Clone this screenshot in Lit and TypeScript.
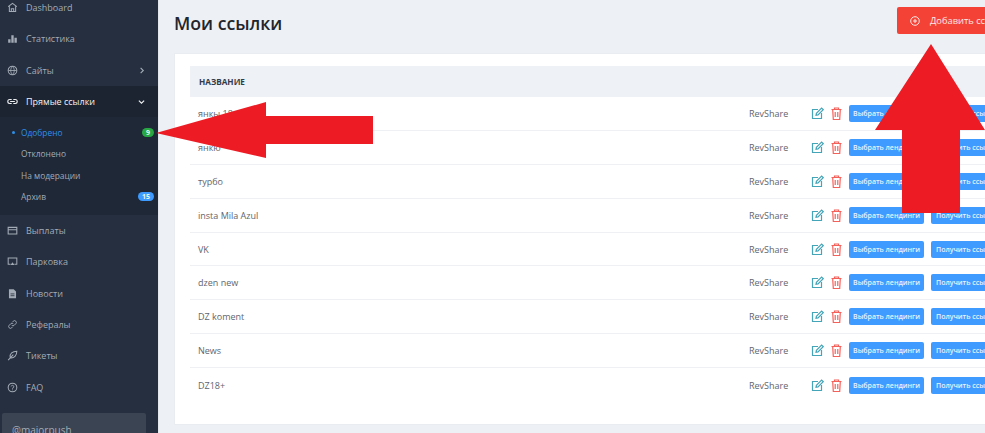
import {html, css, LitElement, svg} from 'lit';
import {customElement} from 'lit/decorators.js';

const ICONS: Record<string, unknown> = {
  home: svg`<path d="M1.500 6 7 1.800 12.500 6M3 5.500V12h8V5.500M5.500 12V8.500h3V12" fill="none" stroke="currentColor" stroke-width="1.300"/>`,
  chart: svg`<path d="M1.500 12.500V8h3v4.500zM5.500 12.500V3h3v9.500zM9.500 12.500V6h3v6.500z" fill="currentColor"/>`,
  globe: svg`<circle cx="7" cy="7" r="5.500" fill="none" stroke="currentColor" stroke-width="1.300"/><path d="M1.800 7h10.400M7 1.800c-3 3-3 7.400 0 10.400M7 1.800c3 3 3 7.400 0 10.400" fill="none" stroke="currentColor" stroke-width="1.100"/>`,
  link: svg`<path d="M6 4.500H3.500a2.500 2.500 0 0 0 0 5H6M8 4.500h2.500a2.500 2.500 0 0 1 0 5H8M4 7h6" fill="none" stroke="currentColor" stroke-width="1.400"/>`,
  card: svg`<path d="M1.500 3h11v8.500h-11zM1.500 6h11" fill="none" stroke="currentColor" stroke-width="1.400"/>`,
  monitor: svg`<path d="M4.500 10.500H1.500V2.500h11v8h-3" fill="none" stroke="currentColor" stroke-width="1.300"/><path d="M7 8l2.500 3.500h-5z" fill="currentColor"/>`,
  file: svg`<path d="M2.500 1.500h6l3 3v8.500h-9z" fill="currentColor"/><path d="M4.500 7.500h5M4.500 9.800h5" stroke="#252f3f" stroke-width="1"/>`,
  chain: svg`<path d="M6 8a2.200 2.200 0 0 0 3.200 0l2-2a2.200 2.200 0 0 0-3.200-3.200L7 3.800M8 6a2.200 2.200 0 0 0-3.200 0l-2 2A2.200 2.200 0 0 0 6 11.200l1-1" fill="none" stroke="currentColor" stroke-width="1.200"/>`,
  feather: svg`<path d="M1.500 12.800 8 6M4 9.500c-.8-4.500 3-8 8.500-8 0 5.500-3.500 9-8 8.500" fill="none" stroke="currentColor" stroke-width="1.300"/>`,
  help: svg`<circle cx="7" cy="7" r="5.500" fill="none" stroke="currentColor" stroke-width="1.300"/><path d="M5.300 5.700A1.700 1.700 0 1 1 7 7.700v.8M7 9.500v1" fill="none" stroke="currentColor" stroke-width="1.100"/>`,
};

const icon = (name: string) => html`<svg class="mi" viewBox="0 0 14 14">${ICONS[name]}</svg>`;

const TOP = [
  {label: 'Dashboard', icon: 'home'},
  {label: 'Статистика', icon: 'chart'},
  {label: 'Сайты', icon: 'globe', chevron: true},
];

const BOTTOM = [
  {label: 'Выплаты', icon: 'card'},
  {label: 'Парковка', icon: 'monitor'},
  {label: 'Новости', icon: 'file'},
  {label: 'Рефералы', icon: 'chain'},
  {label: 'Тикеты', icon: 'feather'},
  {label: 'FAQ', icon: 'help'},
];

const LINKS = ['янкы 18+', 'янкю', 'турбо', 'insta Mila Azul', 'VK', 'dzen new', 'DZ koment', 'News', 'DZ18+'];

@customElement('app-root')
export class AppRoot extends LitElement {
  static styles = css`
    :host {
      display: block;
      position: relative;
      width: 985px;
      height: 433px;
      overflow: hidden;
      font-family: 'Open Sans', 'Noto Sans', sans-serif;
      background: #edf0f4;
    }
    .layout {
      display: flex;
      height: 433px;
    }
    .side {
      flex: 0 0 158px;
      background: #252f3f;
      color: #a3abb6;
      font-size: 9px;
      overflow: hidden;
    }
    .nav {
      margin-top: -8.300px;
    }
    .item {
      display: flex;
      align-items: center;
      height: 31.400px;
      padding: 0 13px 0 7px;
    }
    .mi {
      width: 11px;
      height: 11px;
      margin-right: 8px;
      flex: none;
    }
    .item .grow {
      flex: 1;
    }
    .chev {
      width: 7px;
      height: 7px;
      fill: none;
      stroke: currentColor;
      stroke-width: 1.300;
    }
    .open {
      background: #1c2431;
      color: #f0f2f4;
    }
    .sub {
      background: #1f2836;
      padding: 5px 4px 8px 21px;
      font-size: 8.400px;
    }
    .sub div {
      position: relative;
      display: flex;
      align-items: center;
      justify-content: space-between;
      height: 21.100px;
    }
    .sub .on {
      color: #2f8fe8;
    }
    .sub .on::before {
      content: '';
      position: absolute;
      left: -9px;
      top: 9px;
      width: 3px;
      height: 3px;
      border-radius: 50%;
      background: #2f8fe8;
    }
    .badge {
      font-size: 7px;
      font-weight: 700;
      color: #e9f5ec;
      border-radius: 8px;
      line-height: 9px;
      padding: 0 4px;
    }
    .green {
      background: #28a745;
    }
    .blue {
      background: #3d9bff;
    }
    .user {
      margin: 10px 12px 0 2px;
      height: 60px;
      background: #3a4453;
      border-radius: 2px;
      padding: 10px;
      font-size: 10px;
    }
    .main {
      flex: 1;
      min-width: 0;
      border-left: 1px solid #e4e7eb;
    }
    .head {
      display: flex;
      justify-content: space-between;
      align-items: center;
      height: 41px;
      margin-top: 7px;
      padding: 0 0 14px 15px;
      box-sizing: border-box;
      margin-bottom: 5px;
    }
    h1 {
      margin: 0;
      padding-top: 4px;
      font-size: 17.700px;
      font-weight: 600;
      color: #22262c;
    }
    .add {
      display: flex;
      align-items: center;
      width: 88px;
      height: 27px;
      flex: none;
      box-sizing: border-box;
      padding-left: 13px;
      background: #f44336;
      color: #fde9e7;
      font-size: 9.300px;
      white-space: nowrap;
      border-radius: 2px 0 0 2px;
      overflow: hidden;
    }
    .add svg {
      width: 10px;
      height: 10px;
      margin-right: 10px;
      flex: none;
    }
    .card {
      background: #fff;
      margin-left: 15px;
      height: 372px;
      padding: 12px 0 0 15px;
      box-sizing: border-box;
      border: 1px solid #e9ecf0;
      border-right: 0;
    }
    .thead {
      height: 31px;
      background: #eef1f5;
      display: flex;
      align-items: center;
      padding-left: 9px;
      font-size: 8.200px;
      font-weight: 700;
      color: #333b48;
    }
    .row {
      display: grid;
      grid-template-columns: 551px 62px 20px 18px 82px 80px;
      align-items: center;
      height: 33.900px;
      padding-left: 8px;
      box-sizing: border-box;
      border-bottom: 1px solid #eef0f3;
      font-size: 9px;
      color: #5f656d;
      white-space: nowrap;
    }
    .row:last-child {
      border-bottom: 0;
    }
    .act {
      display: block;
    }
    .btn {
      display: flex;
      align-items: center;
      justify-content: center;
      height: 17px;
      background: #3f9bff;
      color: #e8f3ff;
      font-size: 7px;
      font-weight: 600;
      border-radius: 2px;
    }
    .btn.pick {
      width: 75px;
    }
    .btn.get {
      width: 80px;
      justify-content: flex-start;
      padding-left: 5px;
      box-sizing: border-box;
      overflow: hidden;
    }
    .arrow {
      position: absolute;
      fill: #ed1c24;
    }
    .arrow.left {
      left: 156px;
      top: 101px;
    }
    .arrow.up {
      left: 875px;
      top: 44px;
    }
  `;

  renderItem(item: {label: string; icon: string; chevron?: boolean}) {
    return html`
      <div class="item">
        ${icon(item.icon)}<span class="grow">${item.label}</span>
        ${item.chevron ? html`<svg class="chev" viewBox="0 0 8 8"><path d="M3 1l3 3-3 3"/></svg>` : ''}
      </div>
    `;
  }

  renderRow(name: string) {
    return html`
      <div class="row">
        <span>${name}</span>
        <span>RevShare</span>
        <svg class="act" width="13" height="13" viewBox="0 0 13 13" fill="none" stroke="#45a5b8" stroke-width="1.200">
          <path d="M7 2.500H1.500v9h9V6"/>
          <path d="M5 8.300l.4-2L10.600 1l1.600 1.600L7 7.900z"/>
        </svg>
        <svg class="act" width="11" height="13" viewBox="0 0 11 13" fill="none" stroke="#f4605a" stroke-width="1.200">
          <path d="M.5 2.500h10M3.500 2.500V1h4v1.500M1.700 2.500l.6 10h6.400l.6-10M4.200 5v5M6.800 5v5"/>
        </svg>
        <span class="btn pick">Выбрать лендинги</span>
        <span class="btn get">Получить ссылку</span>
      </div>
    `;
  }

  render() {
    return html`
      <div class="layout">
        <aside class="side">
          <div class="nav">
            ${TOP.map(i => this.renderItem(i))}
            <div class="item open">
              ${icon('link')}<span class="grow">Прямые ссылки</span>
              <svg class="chev" viewBox="0 0 8 8"><path d="M1 3l3 3 3-3"/></svg>
            </div>
            <div class="sub">
              <div class="on">Одобрено <span class="badge green">9</span></div>
              <div>Отклонено</div>
              <div>На модерации</div>
              <div>Архив <span class="badge blue">15</span></div>
            </div>
            ${BOTTOM.map(i => this.renderItem(i))}
            <div class="user">@majorpush</div>
          </div>
        </aside>
        <main class="main">
          <div class="head">
            <h1>Мои ссылки</h1>
            <div class="add">
              <svg viewBox="0 0 10 10" fill="none" stroke="currentColor">
                <circle cx="5" cy="5" r="4.300"/>
                <path d="M3 5h4M5 3v4"/>
              </svg>
              Добавить ссылку
            </div>
          </div>
          <section class="card">
            <div class="thead">НАЗВАНИЕ</div>
            ${LINKS.map(n => this.renderRow(n))}
          </section>
        </main>
      </div>
      <svg class="arrow left" width="218" height="58" viewBox="0 0 218 58">
        <path d="M0 32 110 1v14h107v28H110v14z"/>
      </svg>
      <svg class="arrow up" width="110" height="170" viewBox="0 0 110 170">
        <path d="M56 0 110 86H85v83H27V86H0z"/>
      </svg>
    `;
  }
}
